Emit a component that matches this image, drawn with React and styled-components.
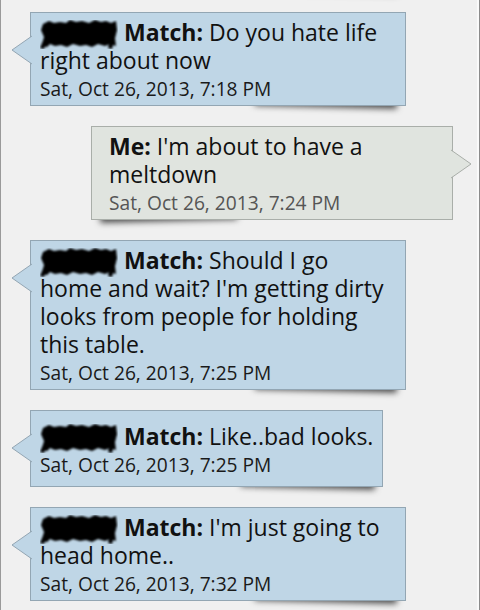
import React from 'react';
import styled, { createGlobalStyle } from 'styled-components';

const GlobalStyle = createGlobalStyle`
  html, body {
    margin: 0;
    padding: 0;
    background: #f0f0f0;
  }
`;

const messages = [
  { from: 'match', text: 'Are you still coming or what', time: 'Sat, Oct 26, 2013, 7:10 PM' },
  { from: 'match', text: 'Do you hate life right about now', time: 'Sat, Oct 26, 2013, 7:18 PM' },
  { from: 'me', text: "I'm about to have a meltdown", time: 'Sat, Oct 26, 2013, 7:24 PM' },
  {
    from: 'match',
    text: "Should I go home and wait? I'm getting dirty looks from people for holding this table.",
    time: 'Sat, Oct 26, 2013, 7:25 PM',
  },
  { from: 'match', text: 'Like..bad looks.', time: 'Sat, Oct 26, 2013, 7:25 PM' },
  { from: 'match', text: "I'm just going to head home..", time: 'Sat, Oct 26, 2013, 7:32 PM' },
];

export default function App() {
  return (
    <>
      <GlobalStyle />
      <Frame>
        <List>
          {messages.map((m, i) => (
            <Bubble key={i} $me={m.from === 'me'}>
              <Tail $me={m.from === 'me'} width="21" height="28" viewBox="0 0 21 28">
                {m.from === 'me' ? (
                  <>
                    <polygon points="0,0 20,14 0,28" fill="#e0e4df" />
                    <polyline points="0,0 20,14 0,28" fill="none" stroke="#a9aea9" strokeWidth="1" />
                  </>
                ) : (
                  <>
                    <polygon points="21,0 1,14 21,28" fill="#bfd6e6" />
                    <polyline points="21,0 1,14 21,28" fill="none" stroke="#93a6b3" strokeWidth="1" />
                  </>
                )}
              </Tail>
              <Text>
                {m.from === 'me' ? (
                  <Sender>Me:</Sender>
                ) : (
                  <>
                    <Redacted />
                    {' '}
                    <Sender>Match:</Sender>
                  </>
                )}{' '}
                {m.text}
              </Text>
              <Time $me={m.from === 'me'}>{m.time}</Time>
            </Bubble>
          ))}
        </List>
      </Frame>
    </>
  );
}

function Redacted() {
  return (
    <Scribble width="78" height="29" viewBox="0 0 78 29">
      <defs>
        <filter id="soft" x="-10%" y="-20%" width="120%" height="140%">
          <feGaussianBlur stdDeviation="0.8" />
        </filter>
      </defs>
      <g filter="url(#soft)" fill="#060606">
        <path d="M3,4 L9,1 L14,3 L20,2 L26,3 L30,0 L36,2 L42,1 L49,3 L55,0 L61,2 L66,1 L71,3 L76,1 L77,10 L75,18 L76,26 L70,24 L65,26 L58,24 L52,27 L46,25 L40,26 L33,24 L27,27 L21,25 L15,26 L10,24 L7,27 L2,26 L4,17 L1,10 Z" />
        <path d="M73,8 L77,9 L72,29 L68,28 Z" />
        <path d="M0,28 L5,16 L8,17 L4,29 Z" />
      </g>
    </Scribble>
  );
}

const Frame = styled.div`
  width: 478px;
  height: 610px;
  border-left: 1px solid #9a9a9a;
  border-right: 1px solid #8c8c8c;
  box-shadow: inset -2px 0 0 #fafafa;
  background: #f0f0f0;
  overflow: hidden;
  font-family: 'Open Sans', 'Noto Sans', sans-serif;
  color: #111;
`;

const List = styled.div`
  position: relative;
  z-index: 0;
  height: 100%;
  box-sizing: border-box;
  display: flex;
  flex-direction: column;
  justify-content: flex-end;
  gap: 20px;
  padding: 0 0 9px;
`;

const Bubble = styled.div`
  position: relative;
  flex-shrink: 0;
  box-sizing: border-box;
  display: flex;
  flex-direction: column;
  justify-content: center;
  min-height: 77px;
  width: fit-content;
  max-width: ${p => (p.$me ? '362px' : '376px')};
  align-self: ${p => (p.$me ? 'flex-end' : 'flex-start')};
  margin: ${p => (p.$me ? '0 26px 0 0' : '0 0 0 29px')};
  padding: ${p => (p.$me ? '5px 10px 4px 17px' : '5px 9px 4px 9px')};
  background: ${p => (p.$me ? '#e0e4df' : '#bfd6e6')};
  border: 1px solid ${p => (p.$me ? '#a9aea9' : '#93a6b3')};

  &::after {
    content: '';
    position: absolute;
    z-index: -1;
    bottom: 4px;
    ${p => (p.$me ? 'left: 8px;' : 'right: 8px;')}
    width: 38%;
    height: 10px;
    box-shadow: 0 6px 6px rgba(0, 0, 0, 0.7);
    transform: rotate(${p => (p.$me ? '-1.5deg' : '1.5deg')});
  }
`;

const Tail = styled.svg`
  position: absolute;
  top: 23px;
  ${p => (p.$me ? 'right: -20px;' : 'left: -20px;')}
  overflow: visible;
`;

const Text = styled.div`
  font-size: 23px;
  line-height: 28px;
`;

const Sender = styled.b`
  font-weight: 700;
`;

const Scribble = styled.svg`
  display: inline-block;
  vertical-align: -3px;
  margin: -5px 0;
`;

const Time = styled.div`
  margin-top: 3px;
  font-size: 19.2px;
  line-height: 24px;
  color: ${p => (p.$me ? '#555' : '#1a1a1a')};
`;
